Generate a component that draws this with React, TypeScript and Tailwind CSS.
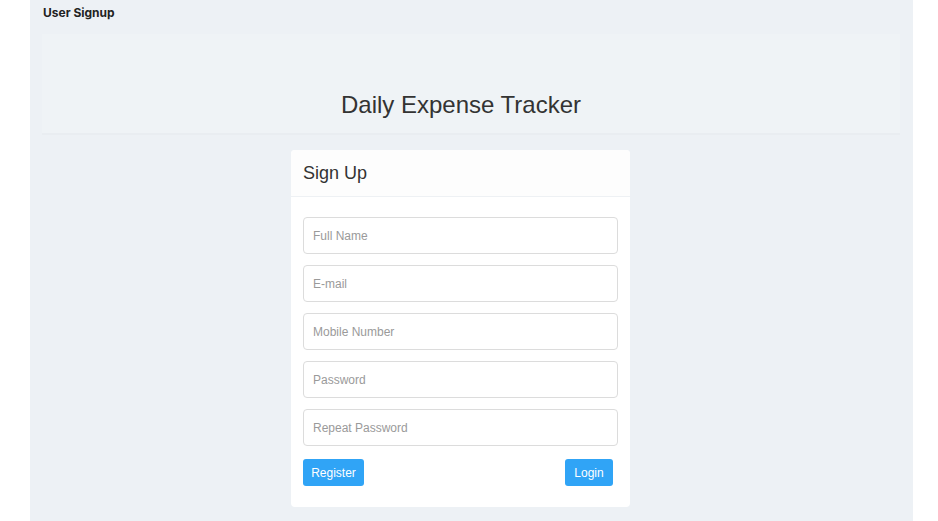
const fields = ["Full Name", "E-mail", "Mobile Number", "Password", "Repeat Password"];

const App = () => {
  return (
    <div className="min-h-[521px] bg-white" style={{ fontFamily: "'Liberation Sans', Arial, sans-serif" }}>
      <div className="ml-[30px] w-[883px] min-h-[521px] bg-[#edf1f5] pb-4">
        <div className="h-[26px] pl-[13px] flex items-center">
          <span className="text-[12px] font-bold text-[#222]" style={{ fontFamily: "Inter, sans-serif" }}>
            User Signup
          </span>
        </div>
        <div className="mt-[8px] ml-[12px] w-[858px] h-[101px] bg-[#eff3f6] border-b-2 border-[#e9edf1] flex items-end justify-center pb-[14px] pr-[20px]">
          <h1 className="text-[24px] leading-[28px] text-[#333]">Daily Expense Tracker</h1>
        </div>
        <div className="mt-[15px] ml-[261px] w-[339px] bg-white rounded-[4px]">
          <div className="h-[47px] px-3 flex items-center border-b border-[#eef1f4] bg-[#fdfdfd] rounded-t-[4px]">
            <span className="text-[18px] text-[#333]">Sign Up</span>
          </div>
          <div className="px-3 pt-[20px] pb-[21px]">
            <div className="flex flex-col gap-[11px]">
              {fields.map((f) => (
                <input
                  key={f}
                  type="text"
                  placeholder={f}
                  className="h-[37px] w-full border border-[#dcdcdc] rounded-[4px] px-[9px] text-[12px] text-[#555] placeholder:text-[#9a9a9a] outline-none"
                />
              ))}
            </div>
            <div className="mt-[13px] flex justify-between pr-[5px]">
              <button className="h-[27px] w-[61px] rounded-[3px] bg-[#30a4f6] text-white text-[12px]">Register</button>
              <button className="h-[27px] w-[48px] rounded-[3px] bg-[#30a4f6] text-white text-[12px]">Login</button>
            </div>
          </div>
        </div>
      </div>
    </div>
  );
};

export default App;
